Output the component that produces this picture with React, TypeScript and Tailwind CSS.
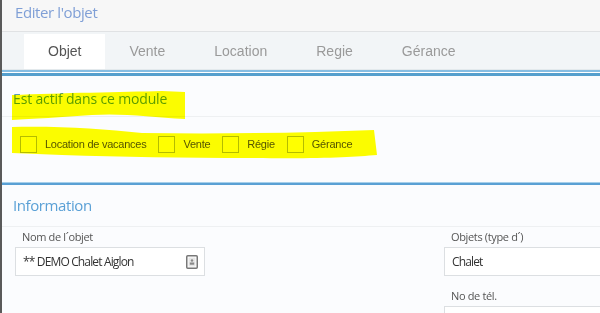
const tabs = ['Objet', 'Vente', 'Location', 'Regie', 'Gérance']
const modules = ['Location de vacances', 'Vente', 'Régie', 'Gérance']

const openSans = "font-['Open_Sans',sans-serif]"
const arial = "font-['Liberation_Sans',Arial,sans-serif]"

const ContactIcon = () => (
  <svg width="12" height="14" viewBox="0 0 12 14" fill="none">
    <rect x="0.75" y="0.75" width="10.5" height="12.5" rx="1" stroke="#777" strokeWidth="1.5" />
    <rect x="2.5" y="2.5" width="7" height="9" fill="#e6e6e6" />
    <circle cx="6" cy="5.5" r="1.2" fill="#888" />
    <rect x="3.8" y="7.5" width="4.4" height="2.2" fill="#888" />
  </svg>
)

const Field = ({ label, value, icon }: { label: string; value?: string; icon?: boolean }) => (
  <div className="flex flex-col">
    <span className="h-[20px] pl-[7px] text-[11px] leading-[20px] tracking-[-0.35px] text-[#555]">{label}</span>
    <div className="flex h-[29px] items-center justify-between border border-[#dcdfe2] bg-white pr-[6px] pl-[7px]">
      <span className="text-[12px] tracking-[-0.85px] text-[#333]">{value}</span>
      {icon && <ContactIcon />}
    </div>
  </div>
)

export default function App() {
  return (
    <div className={`relative flex h-[313px] w-[600px] flex-col overflow-hidden border-l-2 border-[#5a5a5a] bg-[#fbfcfe] ${openSans}`}>
      {/* entête */}
      <div className="flex h-[32px] shrink-0 items-center border-b border-[#e0e2e4] bg-[#f7f7f7] pb-[7px] pl-[13px]">
        <h1 className="text-[15px] tracking-[-0.4px] text-[#7f9fd6]">Editer l'objet</h1>
      </div>

      {/* onglets */}
      <div className={`flex h-[37px] shrink-0 items-end bg-[#f2f5f7] pl-[22px] ${arial}`}>
        {tabs.map((t, i) => (
          <div
            key={t}
            className={`flex h-[35px] items-center px-[24px] text-[14px] ${
              i === 0 ? 'bg-white text-[#555]' : 'mr-[1px] text-[#9a9a9a]'
            }`}
          >
            {t}
          </div>
        ))}
      </div>
      <div className="h-[1px] shrink-0 bg-[#e3e9ec]" />
      <div className="h-[2px] shrink-0 bg-[#86bde2]" />
      <div className="h-[1px] shrink-0 bg-white" />
      <div className="h-[3px] shrink-0 bg-[#559fcd]" />

      {/* modules */}
      <div className="flex h-[106px] shrink-0 flex-col">
        <div className="flex h-[41px] items-center border-b border-[#eef0f2] pt-[4px] pl-[11px]">
          <h2 className="text-[14px] tracking-[-0.15px] text-[#5c9dd2]">Est actif dans ce module</h2>
        </div>
        <div className={`flex h-[50px] items-center pt-[5px] pl-[18px] ${arial}`}>
          {modules.map((m) => (
            <label key={m} className="mr-[12px] flex items-center gap-[8px]">
              <span className="h-[17px] w-[17px] border border-[#b4bcc4] bg-white" />
              <span className="text-[11px] tracking-[-0.25px] text-[#555]">{m}</span>
            </label>
          ))}
        </div>
      </div>
      <div className="h-[1px] shrink-0 bg-[#a6cfea]" />
      <div className="h-[2px] shrink-0 bg-[#5aa0d4]" />

      {/* information */}
      <div className="flex h-[42px] shrink-0 items-center border-b border-[#eef0f2] pl-[11px]">
        <h2 className="text-[15px] tracking-[-0.4px] text-[#5aa0d6]">Information</h2>
      </div>
      <div className="flex gap-[239px] pl-[13px]">
        <div className="w-[190px] shrink-0">
          <Field label="Nom de l´objet" value="** DEMO Chalet Aiglon" icon />
        </div>
        <div className="flex w-[200px] shrink-0 flex-col gap-[10px]">
          <Field label="Objets (type d´)" value="Chalet" />
          <Field label="No de tél." />
        </div>
      </div>

      {/* surlignage */}
      <svg
        className="pointer-events-none absolute top-0 left-0 mix-blend-multiply"
        width="600"
        height="313"
        viewBox="0 0 600 313"
      >
        <path
          d="M10 95 C60 93 120 92 160 91 L183 92 L183 119 C150 117 120 113 90 115 C60 117 30 119 10 120 Z"
          fill="#ffff00"
        />
        <path
          d="M10 127 C60 126 100 129 140 133 C220 134 300 133 372 130 L375 155 C350 157 320 159 250 158 C180 158 120 157 60 155 L10 153 Z"
          fill="#ffff00"
        />
      </svg>
    </div>
  )
}
